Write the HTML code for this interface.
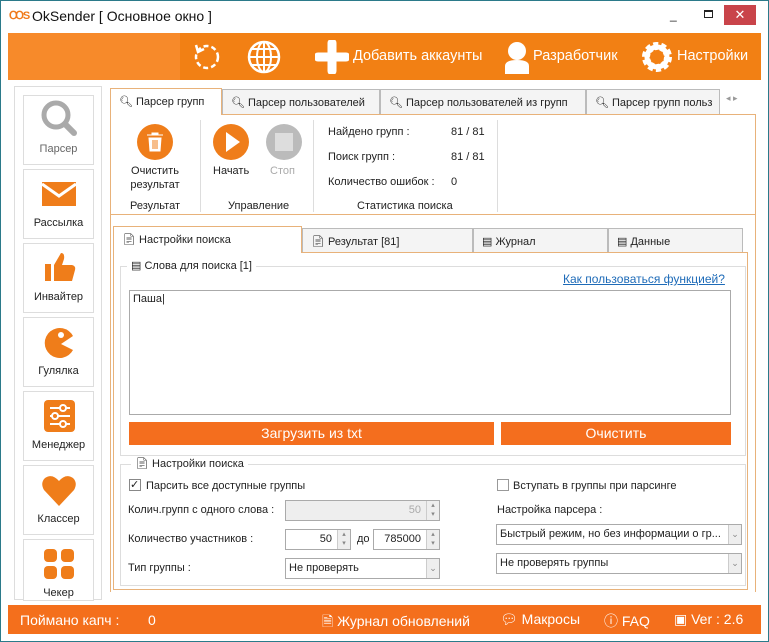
<!DOCTYPE html><html><head><meta charset="utf-8"><style>
*{box-sizing:border-box;margin:0;padding:0}
body{width:769px;height:642px;position:relative;background:#fff;font-family:"Liberation Sans",sans-serif;font-size:11px;color:#222;overflow:hidden}
.a{position:absolute}
.ic{fill:#ef7d1a}
.tab{position:absolute;border:1px solid #bbb;border-bottom:none;background:#f4f4f4;font-size:11px;padding:6px 0 0 8px;height:26px}
.btn{position:absolute;background:#f46e1e;color:#fff;font-size:14px;text-align:center;line-height:23px}
.side{position:absolute;left:23px;width:71px;border:1px solid #ddd;background:#fff;text-align:center;font-size:11px}
.gb{position:absolute;border:1px solid #ddd}
.in{position:absolute;border:1px solid #aaa;background:#fff;height:21px;font-size:11px;line-height:19px;padding:0 3px}
.sp{position:absolute;right:0;top:0;width:13px;height:19px;border-left:1px solid #ccc;background:#eee;font-size:7px;line-height:9px;text-align:center;color:#888}
</style></head><body>
<div class="a" style="left:0;top:0;width:769px;height:642px;border:1px solid #2b7a8a"></div>
<div class="a" style="left:9px;top:9px;font-size:11px;color:#f07a1a;font-weight:bold;letter-spacing:-1px">ꝎS</div>
<div class="a" style="left:32px;top:8px;font-size:14px;color:#111">OkSender [ Основное окно ]</div>
<div class="a" style="left:670px;top:8px;font-size:12px">_</div>
<div class="a" style="left:704px;top:10px;width:9px;height:8px;border:1px solid #222;border-top-width:2px"></div>
<div class="a" style="left:724px;top:5px;width:32px;height:20px;background:#c9444a;color:#fff;text-align:center;font-size:13px;line-height:20px">✕</div>
<div class="a" style="left:8px;top:33px;width:753px;height:47px;background:#f78a2a"></div>
<div class="a" style="left:180px;top:33px;width:581px;height:47px;background:#f28014"></div>
<svg class="a" style="left:190px;top:40px" width="34" height="34"><circle cx="17" cy="17" r="11" fill="none" stroke="#fff" stroke-width="2.5" stroke-dasharray="5 3"/><path d="M6 5l2 7 6-3" fill="none" stroke="#fff" stroke-width="2.5"/></svg>
<svg class="a" style="left:247px;top:40px" width="34" height="34"><circle cx="17" cy="17" r="15" fill="none" stroke="#fff" stroke-width="2.5"/><ellipse cx="17" cy="17" rx="7" ry="15" fill="none" stroke="#fff" stroke-width="2"/><path d="M2 17h30M17 2v30M5 9h24M5 25h24" stroke="#fff" stroke-width="2"/></svg>
<svg class="a" style="left:315px;top:40px" width="34" height="34"><path d="M17 3v28M3 17h28" stroke="#fff" stroke-width="9" stroke-linecap="round"/></svg>
<div class="a" style="left:353px;top:48px;font-size:14.5px;color:#fff">Добавить аккаунты</div>
<svg class="a" style="left:504px;top:40px" width="26" height="35"><circle cx="13" cy="11" r="9" fill="#fff"/><path d="M1 34v-8q0-6 12-6t12 6v8z" fill="#fff"/></svg>
<div class="a" style="left:533px;top:48px;font-size:14.5px;color:#fff">Разработчик</div>
<svg class="a" style="left:640px;top:40px" width="34" height="34"><circle cx="17" cy="17" r="11" fill="none" stroke="#fff" stroke-width="8" stroke-dasharray="4.3 2.6"/><circle cx="17" cy="17" r="10" fill="none" stroke="#fff" stroke-width="5"/></svg>
<div class="a" style="left:677px;top:48px;font-size:14.5px;color:#fff">Настройки</div>

<div class="a" style="left:14px;top:86px;width:88px;height:514px;border:1px solid #ddd"></div>
<div class="side" style="top:95px;height:70px"><svg width="40" height="42" style="margin-top:2px"><circle cx="17" cy="17" r="12" fill="none" stroke="#aaa" stroke-width="5"/><path d="M26 26l9 9" stroke="#aaa" stroke-width="6" stroke-linecap="round"/></svg><div style="color:#666">Парсер</div></div>
<div class="side" style="top:169px;height:70px"><svg width="40" height="40" style="margin-top:4px"><path d="M3 8h34v24H3z" class="ic"/><path d="M3 10l17 12 17-12" fill="none" stroke="#fff" stroke-width="3"/></svg><div>Рассылка</div></div>
<div class="side" style="top:243px;height:70px"><svg width="40" height="40" style="margin-top:4px"><rect x="6" y="16" width="6" height="17" class="ic"/><path d="M15 33V17l7-12q4 0 3 6l-2 6h10q4 1 3 5l-3 11z" class="ic"/></svg><div>Инвайтер</div></div>
<div class="side" style="top:317px;height:70px"><svg width="40" height="40" style="margin-top:4px"><path d="M34 14A15 15 0 1 0 34 28L22 22z" class="ic"/><circle cx="22" cy="13" r="3" fill="#fff"/></svg><div>Гулялка</div></div>
<div class="side" style="top:391px;height:70px"><svg width="40" height="40" style="margin-top:4px"><rect x="5" y="4" width="31" height="32" rx="4" class="ic"/><path d="M11 12h20M11 20h20M11 28h20" stroke="#fff" stroke-width="2"/><circle cx="24" cy="12" r="3" fill="#ef7d1a" stroke="#fff" stroke-width="2"/><circle cx="16" cy="20" r="3" fill="#ef7d1a" stroke="#fff" stroke-width="2"/><circle cx="24" cy="28" r="3" fill="#ef7d1a" stroke="#fff" stroke-width="2"/></svg><div>Менеджер</div></div>
<div class="side" style="top:465px;height:70px"><svg width="40" height="40" style="margin-top:4px"><path d="M20 36L5 20Q1 13 6 8q7-5 14 3 7-8 14-3 5 5 1 12z" class="ic"/></svg><div>Классер</div></div>
<div class="side" style="top:539px;height:62px"><svg width="40" height="40" style="margin-top:4px"><rect x="5" y="5" width="13" height="13" rx="4" class="ic"/><rect x="22" y="5" width="13" height="13" rx="4" class="ic"/><rect x="5" y="22" width="13" height="13" rx="4" class="ic"/><rect x="22" y="22" width="13" height="13" rx="4" class="ic"/></svg><div>Чекер</div></div>

<div class="tab" style="left:222px;top:89px;width:158px;height:25px">🔍︎ Парсер пользователей</div>
<div class="tab" style="left:380px;top:89px;width:206px;height:25px">🔍︎ Парсер пользователей из групп</div>
<div class="tab" style="left:586px;top:89px;width:134px;height:25px;overflow:hidden;white-space:nowrap">🔍︎ Парсер групп польз</div>
<div class="a" style="left:726px;top:93px;font-size:9px;color:#999">◂ ▸</div>
<div class="a" style="left:110px;top:114px;width:646px;height:478px;border:1px solid #e8b27a;border-bottom:none"></div>
<div class="tab" style="left:110px;top:88px;width:112px;height:27px;background:#fff;border-color:#e8b27a">🔍︎ Парсер групп</div>
<div class="a" style="left:111px;top:214px;width:644px;border-top:1px solid #e8b27a"></div>
<div class="a" style="left:200px;top:120px;height:92px;border-left:1px solid #ddd"></div>
<div class="a" style="left:313px;top:120px;height:92px;border-left:1px solid #ddd"></div>
<div class="a" style="left:497px;top:120px;height:92px;border-left:1px solid #ddd"></div>
<svg class="a" style="left:136px;top:123px" width="38" height="38"><circle cx="19" cy="19" r="18" class="ic"/><path d="M11 12h16M16 12v-2h6v2M13 15h12l-1 13H14z" fill="#fff" stroke="#fff"/><path d="M17 17v9M19 17v9M21 17v9" stroke="#ef7d1a"/></svg>
<div class="a" style="left:118px;top:164px;width:74px;text-align:center;line-height:14px">Очистить<br>результат</div>
<div class="a" style="left:118px;top:200px;width:74px;text-align:center">Результат</div>
<svg class="a" style="left:212px;top:123px" width="38" height="38"><circle cx="19" cy="19" r="18" class="ic"/><path d="M14 9l14 10-14 10z" fill="#fff"/></svg>
<svg class="a" style="left:265px;top:123px" width="38" height="38"><circle cx="19" cy="19" r="18" fill="#bbb"/><rect x="10" y="10" width="18" height="18" fill="#ddd"/></svg>
<div class="a" style="left:213px;top:165px">Начать</div><div class="a" style="left:270px;top:165px;color:#aaa">Стоп</div>
<div class="a" style="left:228px;top:200px">Управление</div>
<div class="a" style="left:328px;top:126px">Найдено групп :</div><div class="a" style="left:451px;top:126px">81 / 81</div>
<div class="a" style="left:328px;top:151px">Поиск групп :</div><div class="a" style="left:451px;top:151px">81 / 81</div>
<div class="a" style="left:328px;top:176px">Количество ошибок :</div><div class="a" style="left:451px;top:176px">0</div>
<div class="a" style="left:357px;top:200px">Статистика поиска</div>

<div class="tab" style="left:302px;top:228px;width:171px;height:25px">📄︎ Результат [81]</div>
<div class="tab" style="left:473px;top:228px;width:135px;height:25px">▤ Журнал</div>
<div class="tab" style="left:608px;top:228px;width:135px;height:25px">▤ Данные</div>
<div class="a" style="left:113px;top:252px;width:635px;height:338px;border:1px solid #e8b27a"></div>
<div class="tab" style="left:113px;top:226px;width:189px;height:27px;background:#fff;border-color:#e8b27a;font-size:11px">📄︎ Настройки поиска</div>
<div class="gb" style="left:120px;top:266px;width:626px;height:190px"></div>
<div class="a" style="left:127px;top:259px;background:#fff;padding:0 4px">▤ Слова для поиска [1]</div>
<div class="a" style="left:563px;top:272px;font-size:12px;color:#1e6bb8;text-decoration:underline">Как пользоваться функцией?</div>
<div class="a" style="left:129px;top:290px;width:602px;height:125px;border:1px solid #aaa;padding:2px 3px">Паша|</div>
<div class="btn" style="left:129px;top:422px;width:365px">Загрузить из txt</div>
<div class="btn" style="left:501px;top:422px;width:230px">Очистить</div>
<div class="gb" style="left:120px;top:464px;width:626px;height:122px"></div>
<div class="a" style="left:131px;top:457px;background:#fff;padding:0 4px">📄︎ Настройки поиска</div>
<div class="a" style="left:129px;top:479px;width:12px;height:12px;border:1px solid #888;font-size:11px;line-height:10px">✓</div>
<div class="a" style="left:146px;top:480px">Парсить все доступные группы</div>
<div class="a" style="left:497px;top:479px;width:12px;height:12px;border:1px solid #999"></div>
<div class="a" style="left:513px;top:480px">Вступать в группы при парсинге</div>
<div class="a" style="left:128px;top:504px">Колич.групп с одного слова :</div>
<div class="in" style="left:285px;top:500px;width:155px;background:#eee;color:#aaa;text-align:right;padding-right:18px">50<div class="sp">▴<br>▾</div></div>
<div class="a" style="left:128px;top:533px">Количество участников :</div>
<div class="in" style="left:285px;top:529px;width:66px;text-align:right;padding-right:18px">50<div class="sp">▴<br>▾</div></div>
<div class="a" style="left:357px;top:533px">до</div>
<div class="in" style="left:373px;top:529px;width:67px;text-align:right;padding-right:18px">785000<div class="sp">▴<br>▾</div></div>
<div class="a" style="left:128px;top:562px">Тип группы :</div>
<div class="in" style="left:285px;top:558px;width:155px">Не проверять<div class="sp" style="font-size:9px;line-height:19px">⌄</div></div>
<div class="a" style="left:497px;top:504px">Настройка парсера :</div>
<div class="in" style="left:496px;top:524px;width:246px;white-space:nowrap;overflow:hidden">Быстрый режим, но без информации о гр...<div class="sp" style="font-size:9px;line-height:19px">⌄</div></div>
<div class="in" style="left:496px;top:553px;width:246px">Не проверять группы<div class="sp" style="font-size:9px;line-height:19px">⌄</div></div>

<div class="a" style="left:8px;top:605px;width:753px;height:29px;background:#f46f1c;color:#fff;font-size:14px">
<span class="a" style="left:12px;top:7px">Поймано капч :</span><span class="a" style="left:140px;top:7px">0</span>
<span class="a" style="left:314px;top:6px">🗎 Журнал обновлений</span>
<span class="a" style="left:492px;top:6px">💬︎ Макросы</span>
<span class="a" style="left:596px;top:6px">ⓘ FAQ</span>
<span class="a" style="left:666px;top:6px">▣ Ver : 2.6</span></div>
</body></html>
